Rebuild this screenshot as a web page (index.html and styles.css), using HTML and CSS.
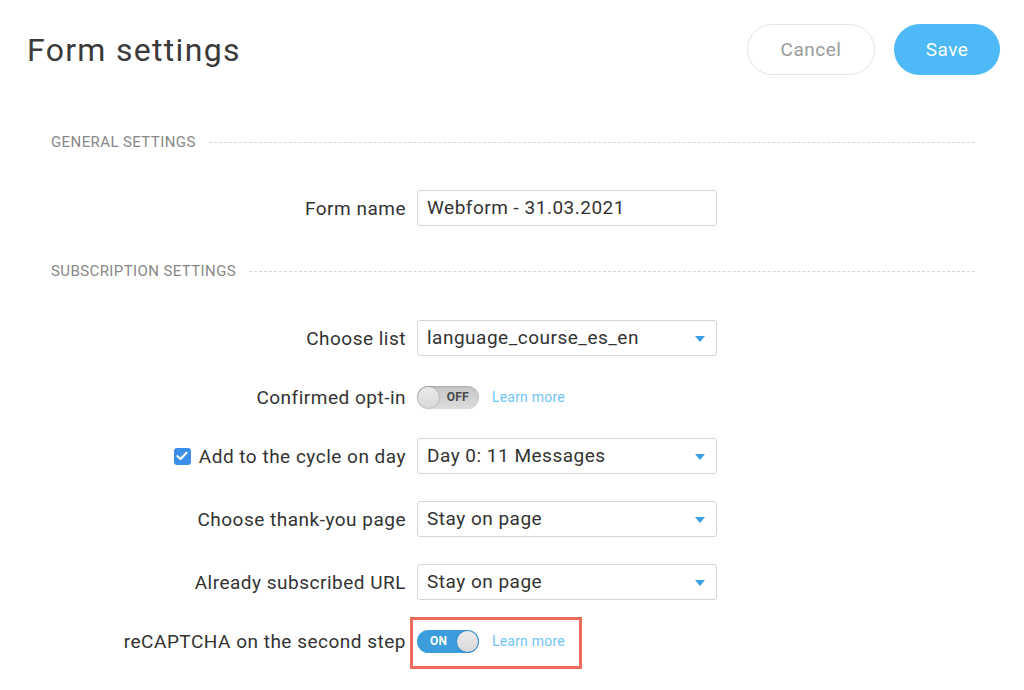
FILE: index.html
```html
<!DOCTYPE html>
<html lang="en">
<head>
  <meta charset="UTF-8" />
  <title>Form settings</title>
  <link rel="stylesheet" href="styles.css">
</head>
<body>

  <div class="header">
    <h1 class="title">Form settings</h1>
    <div class="actions">
      <button class="btn btn-cancel">Cancel</button>
      <button class="btn btn-save">Save</button>
    </div>
  </div>

  <div class="section">
    <div class="section-title"><span>General settings</span></div>
    <div class="rows">
      <div class="row">
        <label class="label">Form name</label>
        <div class="control"><div class="field">Webform - 31.03.2021</div></div>
      </div>
    </div>
  </div>

  <div class="section section-sub">
    <div class="section-title"><span>Subscription settings</span></div>
    <div class="rows">
      <div class="row">
        <label class="label">Choose list</label>
        <div class="control"><div class="field select">language_course_es_en</div></div>
      </div>
      <div class="row row-toggle">
        <label class="label">Confirmed opt-in</label>
        <div class="control">
          <span class="toggle off"><span class="knob"></span><span class="toggle-text">OFF</span></span>
          <a class="learn" href="#">Learn more</a>
        </div>
      </div>
      <div class="row">
        <label class="label"><span class="check"><svg width="12" height="10" viewBox="0 0 12 10"><path d="M1.5 5.2 L4.5 8 L10.5 1.8" fill="none" stroke="#fff" stroke-width="2.2" stroke-linecap="round" stroke-linejoin="round"/></svg></span>Add to the cycle on day</label>
        <div class="control"><div class="field select">Day 0: 11 Messages</div></div>
      </div>
      <div class="row">
        <label class="label">Choose thank-you page</label>
        <div class="control"><div class="field select">Stay on page</div></div>
      </div>
      <div class="row">
        <label class="label">Already subscribed URL</label>
        <div class="control"><div class="field select">Stay on page</div></div>
      </div>
      <div class="row row-toggle">
        <label class="label">reCAPTCHA on the second step</label>
        <div class="control">
          <span class="highlight">
            <span class="toggle on"><span class="toggle-text">ON</span><span class="knob"></span></span>
            <a class="learn" href="#">Learn more</a>
          </span>
        </div>
      </div>
    </div>
  </div>

</body>
</html>
```

FILE: styles.css
```css
body {
  margin: 0;
  padding-bottom: 40px;
  background: #fff;
  font-family: Roboto, "Liberation Sans", sans-serif;
  color: #333;
}
.header {
  display: flex; justify-content: space-between; align-items: center;
  padding: 24px 24px 0 27px;
}
.title {
  margin: 0; font-size: 32px; font-weight: 400; color: #3a3a3a;
  letter-spacing: 1.3px;
}
.actions { display: flex; gap: 19px; }
.btn {
  height: 51px; border-radius: 26px; font-family: inherit;
  font-size: 19px; letter-spacing: 0.5px; cursor: pointer;
}
.btn-cancel {
  width: 128px; background: #fff; color: #9a9a9a;
  border: 1px solid #e3e3e3;
}
.btn-save {
  width: 106px; background: #4db9f7; color: #fff; border: 0;
}
.section { padding: 0 49px 0 51px; margin-top: 58px; }
.section-sub { margin-top: 36px; }
.section-title {
  display: flex; align-items: center; gap: 13px; height: 18px;
  font-size: 15px; letter-spacing: 0.4px; color: #888; text-transform: uppercase;
}
.section-title::after {
  content: ""; flex: 1; border-top: 1px dashed #d6d6d6;
}
.rows {
  display: flex; flex-direction: column; gap: 27px;
  margin-top: 39px;
}
.section-sub .rows { margin-top: 40px; }
.row {
  display: grid; grid-template-columns: 355px 300px;
  column-gap: 11px; align-items: center;
}
.row-toggle { height: 28px; }
.label {
  text-align: right; font-size: 19px; letter-spacing: 0.5px; color: #333;
  display: flex; justify-content: flex-end; align-items: center;
}
.control { display: flex; align-items: center; gap: 13px; }
.field {
  box-sizing: border-box; width: 300px; height: 36px;
  border: 1px solid #d4d4d4; border-radius: 3px;
  padding: 0 9px; font-size: 19px; letter-spacing: 0.5px;
  line-height: 34px; color: #333;
  position: relative;
}
.select::after {
  content: ""; position: absolute; right: 11px; top: 15px;
  border-left: 5px solid transparent; border-right: 5px solid transparent;
  border-top: 6px solid #3a9fe3;
}
.check {
  width: 17px; height: 17px; border-radius: 3px; background: #3b8fe8;
  display: inline-flex; align-items: center; justify-content: center;
  margin-right: 8px;
}
.toggle {
  width: 62px; height: 23px; border-radius: 12px; box-sizing: border-box;
  display: inline-flex; align-items: center; justify-content: space-between;
  padding: 0 1px; font-size: 12px; font-weight: 700; letter-spacing: 0.3px;
}
.toggle .knob {
  width: 21px; height: 21px; border-radius: 50%;
  background: linear-gradient(#ececec, #d8d8d8);
  box-shadow: 0 0 2px rgba(0,0,0,0.35);
}
.toggle.off {
  background: linear-gradient(#c6c6c6, #dcdcdc); color: #4a4a4a;
  box-shadow: inset 0 1px 2px rgba(0,0,0,0.15);
}
.toggle.off .toggle-text { margin-right: 9px; }
.toggle.on { background: #3c9ddd; color: #fff; }
.toggle.on .toggle-text { margin-left: 12px; }
.learn { font-size: 14px; letter-spacing: 0.2px; color: #6ec5f6; text-decoration: none; }
.highlight {
  position: relative; display: inline-flex; align-items: center; gap: 13px;
}
.highlight::after {
  content: ""; position: absolute;
  left: -7px; right: -17px; top: -13px; bottom: -16px;
  border: 3px solid #ee6a5b;
}
```
